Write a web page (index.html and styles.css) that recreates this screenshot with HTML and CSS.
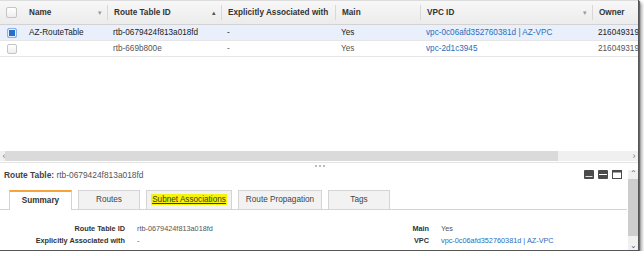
FILE: index.html
```html
<!DOCTYPE html>
<html lang="en">
<head>
  <meta charset="UTF-8">
  <title>Route Tables</title>
  <link rel="stylesheet" href="styles.css">
</head>
<body>
  <div class="frame">
    <!-- list of route tables -->
    <div class="top-pane">
      <div class="grid">
        <div class="row head">
          <div class="cell check"><span class="box"></span></div>
          <div class="cell">Name<span class="sort">&#9662;</span></div>
          <div class="cell">Route Table ID<span class="sort up">&#9652;</span></div>
          <div class="cell">Explicitly Associated with</div>
          <div class="cell">Main</div>
          <div class="cell">VPC ID<span class="sort">&#9662;</span></div>
          <div class="cell">Owner</div>
        </div>
        <div class="row selected">
          <div class="cell check"><span class="box on"></span></div>
          <div class="cell">AZ-RouteTable</div>
          <div class="cell">rtb-0679424f813a018fd</div>
          <div class="cell">-</div>
          <div class="cell">Yes</div>
          <div class="cell link">vpc-0c06afd352760381d | AZ-VPC</div>
          <div class="cell">216049319</div>
        </div>
        <div class="row">
          <div class="cell check"><span class="box"></span></div>
          <div class="cell"></div>
          <div class="cell">rtb-669b800e</div>
          <div class="cell">-</div>
          <div class="cell">Yes</div>
          <div class="cell link">vpc-2d1c3945</div>
          <div class="cell">216049319</div>
        </div>
      </div>
      <div class="hscroll">
        <span class="arrow">&lsaquo;</span>
        <div class="track"><div class="thumb"></div></div>
        <span class="arrow">&rsaquo;</span>
      </div>
    </div>

    <div class="splitter"><span class="dots"></span></div>

    <!-- details of the selected table -->
    <div class="bottom-pane">
      <div class="detail">
        <div class="detail-head">
          <div class="title"><b>Route Table:</b> rtb-0679424f813a018fd</div>
          <div class="icons">
            <svg width="10" height="9" viewBox="0 0 10 9"><rect width="10" height="9" rx="1" fill="#4a4a4a"/><rect x="1.5" y="6" width="7" height="1" fill="#ddd"/></svg>
            <svg width="10" height="9" viewBox="0 0 10 9"><rect width="10" height="9" rx="1" fill="#4a4a4a"/><rect x="1" y="4" width="8" height="1" fill="#fff"/></svg>
            <svg width="10" height="9" viewBox="0 0 10 9"><rect x="0.5" y="0.5" width="9" height="8" fill="#fff" stroke="#4a4a4a"/><rect width="10" height="2.5" fill="#4a4a4a"/></svg>
          </div>
        </div>

        <div class="tabs">
          <div class="tab active">Summary</div>
          <div class="tab">Routes</div>
          <div class="tab"><span class="marked">Subnet Associations</span></div>
          <div class="tab">Route Propagation</div>
          <div class="tab">Tags</div>
        </div>

        <div class="props">
          <div class="prop-col left">
            <div class="label">Route Table ID</div><div class="value">rtb-0679424f813a018fd</div>
            <div class="label">Explicitly Associated with</div><div class="value">-</div>
          </div>
          <div class="prop-col right">
            <div class="label">Main</div><div class="value">Yes</div>
            <div class="label">VPC</div><div class="value link">vpc-0c06afd352760381d | AZ-VPC</div>
          </div>
        </div>
      </div>
      <div class="vscroll">
        <span class="varrow">&#8963;</span>
        <div class="vthumb"></div>
        <span class="varrow">&#8964;</span>
      </div>
    </div>
  </div>
</body>
</html>
```

FILE: styles.css
```css
* { box-sizing: border-box; }
body {
  margin: 0;
  background: #fff;
  font-family: 'Liberation Sans', Arial, sans-serif;
  font-size: 8.2px;
  color: #333;
}
.frame {
  width: 639px;
  height: 251px;
  overflow: hidden;
  background: #fff;
  display: flex;
  flex-direction: column;
  border-right: 1px solid #555;
  border-bottom: 1px solid #555;
  box-shadow: 1px 1px 1px #666, 3px 3px 3px rgba(0, 0, 0, 0.35);
}
.top-pane {
  height: 163px;
  display: flex;
  flex-direction: column;
  border-bottom: 1px solid #e4e4e4;
}
.grid {
  flex: 1;
  overflow: hidden;
}
.row {
  display: grid;
  grid-template-columns: 22px 85px 114px 114px 85px 172px 80px;
  height: 16px;
  border-bottom: 1px solid #e6e6e6;
  align-items: center;
  color: #222;
}
.row .cell {
  padding-left: 6px;
  white-space: nowrap;
  position: relative;
}
.row .cell:nth-child(2) { padding-left: 7px; }
.row .cell.check { padding-left: 7px; display: flex; }
.row.head {
  height: 25px;
  background: linear-gradient(#f7f7f7, #ececec);
  border-top: 1px solid #ddd;
  border-bottom: 1px solid #d2d2d2;
  font-weight: bold;
  color: #333;
}
.row.head .cell { height: 15px; line-height: 15px; border-left: 1px solid #d8d8d8; }
.row.head .cell:nth-child(1),
.row.head .cell:nth-child(2) { border-left: none; }
.row.head .cell.check { padding-left: 6px; align-items: center; }
.sort {
  position: absolute;
  right: 5px;
  top: 0;
  font-weight: normal;
  color: #999;
  font-size: 7px;
}
.sort.up { color: #555; }
.row.selected { background: #e9f0fb; }
.row:not(.selected):not(.head) { color: #555; }
.link { color: #2a6cbb; }
.box {
  display: inline-block;
  width: 10px;
  height: 10px;
  border: 1px solid #c4c4c4;
  border-radius: 2px;
  background: linear-gradient(#fff, #eee);
}
.row.head .box { width: 11px; height: 11px; }
.box.on {
  background: #226fd1;
  border: 1px solid #8fb2e0;
  box-shadow: inset 0 0 0 1px #e9f0fb;
}
.hscroll {
  height: 10px;
  display: flex;
  align-items: center;
  background: #f0f0f0;
  color: #777;
  font-size: 9px;
  margin-bottom: 1px;
}
.hscroll .arrow {
  width: 8px;
  text-align: center;
  line-height: 10px;
}
.hscroll .track {
  flex: 1;
  height: 10px;
  margin: 0 -2px 0 -3px;
}
.hscroll .thumb {
  width: 553px;
  height: 100%;
  background: #dadada;
}
.splitter {
  height: 5px;
  display: flex;
  justify-content: center;
  align-items: center;
}
.dots {
  width: 12px;
  height: 2px;
  margin-left: 2px;
  background: radial-gradient(circle, #bbb 0.8px, transparent 1px) 0 0 / 4px 2px;
}
.bottom-pane {
  flex: 1;
  display: flex;
}
.detail {
  flex: 1;
  display: flex;
  flex-direction: column;
}
.detail-head {
  display: flex;
  justify-content: space-between;
  align-items: center;
  height: 13px;
  padding: 0 6px 0 4px;
}
.title { color: #555; font-size: 8.4px; }
.title b { color: #444; }
.icons {
  display: flex;
  gap: 4px;
}
.icons svg { display: block; }
.tabs {
  display: flex;
  gap: 6px;
  margin-top: 9px;
  padding-left: 9px;
  border-bottom: 1px solid #d4d4d4;
  margin-right: 1px;
}
.tab {
  height: 19px;
  line-height: 17px;
  padding: 0 4px;
  background: #f2f2f2;
  border: 1px solid #d4d4d4;
  border-bottom: none;
  text-align: center;
  color: #444;
  margin-bottom: -1px;
}
.tab:nth-child(1) { width: 63px; }
.tab:nth-child(2) { width: 62px; }
.tab:nth-child(3) { width: 86px; }
.tab:nth-child(4) { width: 84px; }
.tab:nth-child(5) { width: 62px; }
.tab.active {
  background: #fff;
  border-top: 2px solid #f7a53a;
  font-weight: bold;
  color: #333;
  height: 20px;
}
.marked {
  background: #f4f40c;
  text-decoration: underline;
  color: #3a3a10;
  padding: 1px 1px;
}
.props {
  display: flex;
  padding-top: 14px;
  font-size: 7.3px;
}
.prop-col {
  display: grid;
  column-gap: 12px;
  row-gap: 3px;
  align-content: start;
}
.prop-col.left { grid-template-columns: 125px auto; width: 304px; }
.prop-col.right { grid-template-columns: 125px auto; }
.label {
  text-align: right;
  font-weight: bold;
  color: #333;
  line-height: 9px;
}
.value { color: #555; line-height: 9px; }
.value.link { color: #2a6cbb; }
.vscroll {
  width: 10px;
  background: #f0f0f0;
  display: flex;
  flex-direction: column;
  align-items: center;
  color: #666;
  font-size: 8px;
  margin-top: 2px;
}
.varrow { height: 8px; line-height: 8px; }
.vthumb {
  flex: 1;
  width: 100%;
  background: #cdcdcd;
  margin: 1px 0 6px;
}
```
